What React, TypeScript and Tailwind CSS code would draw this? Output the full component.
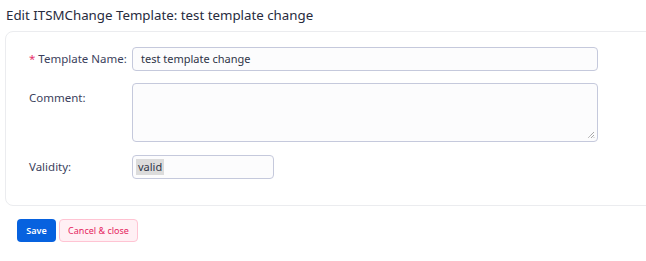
import React from "react";

export default function App() {
  const font = { fontFamily: '"Noto Sans", "Open Sans", sans-serif' };
  return (
    <div className="w-[646px] h-[261px] bg-white overflow-hidden" style={font}>
      <h1 className="pl-[6px] pt-[3px] text-[13.3px] leading-[24px] font-normal text-[#272b3d]">
        Edit ITSMChange Template: test template change
      </h1>
      <div className="ml-[5px] mt-[4px] w-[660px] h-[175px] rounded-[8px] border border-[#ebecef] bg-white pt-[15px] pl-[23px]">
        <div className="flex items-center h-[24px]">
          <label className="w-[103px] text-[11.5px] text-[#3b3f5c]">
            <span className="text-[#e8336b] mr-[3px]">*</span>Template Name:
          </label>
          <div className="w-[466px] h-[24px] rounded-[4px] border border-[#c5c9dc] bg-[#fcfcfd] flex items-center pl-[8px] text-[11px] text-[#2f3447]">
            test template change
          </div>
        </div>
        <div className="flex mt-[12px]">
          <label className="w-[103px] text-[11.5px] text-[#3b3f5c] pt-[6px]">Comment:</label>
          <div className="relative w-[466px] h-[59px] rounded-[4px] border border-[#c5c9dc] bg-[#fcfcfd]">
            <svg className="absolute right-[2px] bottom-[2px]" width="8" height="8" viewBox="0 0 8 8">
              <path d="M7 1 L1 7 M7 4 L4 7 M7 6.5 L6.5 7" stroke="#666" strokeWidth="0.8" strokeDasharray="1 0.6" />
            </svg>
          </div>
        </div>
        <div className="flex items-center mt-[13px]">
          <label className="w-[103px] text-[11.5px] text-[#3b3f5c]">Validity:</label>
          <div className="w-[142px] h-[24px] rounded-[4px] border border-[#c5c9dc] bg-[#fcfcfd] flex items-center pl-[3px]">
            <span className="bg-[#dcdcdc] h-[16px] leading-[16px] px-[2px] text-[11px] text-[#2f3447]">valid</span>
          </div>
        </div>
      </div>
      <div className="flex gap-[3px] pl-[17px] mt-[13px]">
        <button className="w-[39px] h-[23px] rounded-[4px] bg-[#0762df] text-white text-[9px] font-semibold">
          Save
        </button>
        <button className="w-[79px] h-[23px] rounded-[4px] border border-[#ffc4d3] bg-[#fff0f4] text-[#e5245f] text-[9px]">
          Cancel &amp; close
        </button>
      </div>
    </div>
  );
}
